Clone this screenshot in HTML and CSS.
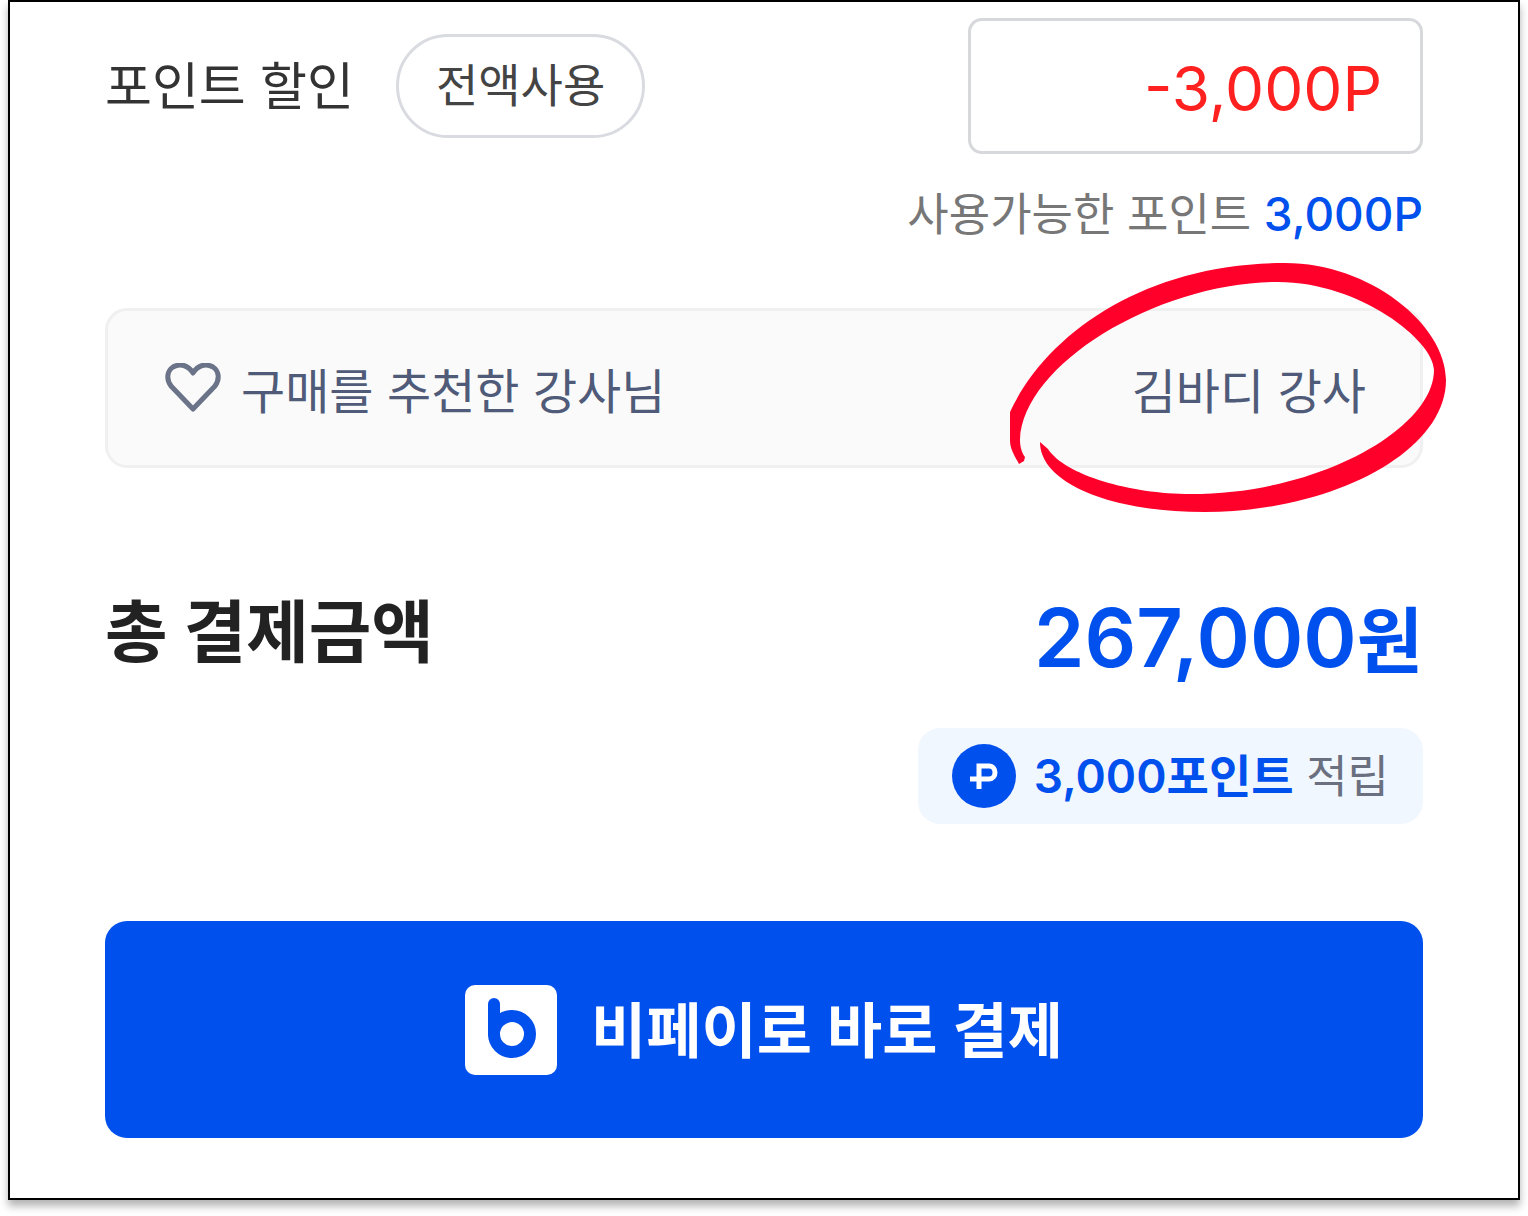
FILE: index.html
```html
<!DOCTYPE html>
<html lang="ko">
<head>
    <meta charset="UTF-8">
    <meta name="viewport" content="width=device-width, initial-scale=1.0">
    <title>결제</title>
    <link rel="stylesheet" href="styles.css">
</head>
<body>

    <form class="card">
        <!-- Point discount -->
        <div class="row">
            <div class="point-label">
                <label for="point">포인트 할인</label>
                <button type="button" class="btn-all">전액사용</button>
            </div>
            <input type="text" id="point" class="point-input" value="-3,000P">
        </div>
        <p class="available">사용가능한 포인트 <strong>3,000P</strong></p>

        <!-- Recommended instructor -->
        <div class="instructor">
            <svg class="icon-heart" viewBox="0 0 56 50" aria-hidden="true">
                <path d="M28 46 L6 23 C1 16 2 8 8 4 C15 0 23 2 28 10 C33 2 41 0 48 4 C54 8 55 16 50 23 Z"/>
            </svg>
            <span>구매를 추천한 강사님</span>
            <span class="instructor-name">김바디 강사</span>
            <svg class="marker" viewBox="0 0 437 249" aria-hidden="true">
                <path d="M0 149 C38 68 138 0 275 0 C360 0 436 62 436 117 C436 190 320 249 195 249 C100 249 30 220 30 179 L38 186 C55 212 120 231 181 231 C310 231 424 165 424 107 C424 78 350 19 268 19 C150 19 13 100 10 177 C10 184 12 190 15 194 L14 198 L9 201 C3 190 0 185 0 177 Z"/>
            </svg>
        </div>

        <!-- Total -->
        <div class="row total">
            <h2>총 결제금액</h2>
            <strong class="price">267,000<span>원</span></strong>
        </div>
        <div class="earn">
            <svg class="icon-point" viewBox="0 0 64 64" aria-hidden="true">
                <circle cx="32" cy="32" r="32"/>
                <path d="M27 45 V22 H37 C45 22 45 35 37 35 H18"/>
            </svg>
            <span><strong>3,000포인트</strong> 적립</span>
        </div>

        <button type="button" class="btn-pay">
            <svg class="logo" viewBox="0 0 92 90" aria-hidden="true">
                <rect width="92" height="90" rx="10"/>
                <path d="M29 19 V49"/>
                <circle cx="47" cy="49" r="18"/>
            </svg>
            <span>비페이로 바로 결제</span>
        </button>
    </form>

</body>
</html>
```

FILE: styles.css
```css
* {
    box-sizing: border-box;
}

body {
    min-height: 100vh;
    margin: 0;
    padding: 0 8px 16px;
    font-family: Inter, "Noto Sans CJK KR", sans-serif;
    background-color: #fff;
    color: #333;
}

button, input {
    font-family: inherit;
}

.card {
    padding: 16px 95px 60px;
    border: 2px solid #000;
    background-color: #fff;
    box-shadow: 0 6px 8px rgba(0, 0, 0, 0.3);
}

.row {
    display: flex;
    justify-content: space-between;
    align-items: center;
}

/* Point discount */
.point-label {
    display: flex;
    align-items: center;
    gap: 42px;
    font-size: 51px;
}

/* Hangul sits low in its line, lift it to the optical middle */
.point-label label, .earn span, .btn-pay span {
    padding-bottom: 6px;
}

.btn-all {
    height: 104px;
    padding: 0 37px 8px;
    border: 3px solid #d9dbe0;
    border-radius: 52px;
    background-color: #fff;
    color: #444;
    font-size: 46px;
}

.point-input {
    width: 455px;
    height: 136px;
    padding: 4px 38px 0;
    border: 3px solid #d6d8dc;
    border-radius: 14px;
    background-color: #fff;
    color: #ff2020;
    font-size: 62px;
    text-align: right;
}

.available {
    margin: 28px 0 61px;
    color: #777;
    font-size: 45px;
    line-height: 64px;
    text-align: right;
}

.available strong {
    color: #0050ee;
    font-size: 46px;
    font-weight: 500;
}

/* Recommended instructor */
.instructor {
    position: relative;
    display: flex;
    align-items: center;
    height: 160px;
    padding: 0 54px 0 57px;
    border: 3px solid #f0f0f1;
    border-radius: 22px;
    background-color: #fafafa;
    color: #4f5b78;
    font-size: 48px;
}

.instructor-name {
    margin-left: auto;
}

.icon-heart {
    width: 56px;
    height: 50px;
    margin-right: 20px;
    fill: none;
    stroke: #6b7388;
    stroke-width: 5;
    stroke-linejoin: round;
}

/* Hand drawn circle over the name */
.marker {
    position: absolute;
    top: -48px;
    right: -27px;
    width: 437px;
    height: 249px;
    fill: #ff002b;
}

/* Total */
.total {
    align-items: flex-start;
    height: 104px;
    margin: 120px 0 36px;
}

.total h2 {
    margin: 0;
    color: #222;
    font-size: 68px;
    line-height: 88px;
}

.price {
    color: #0050ee;
    font-size: 81px;
    font-weight: 600;
    line-height: 100px;
}

.price span {
    font-size: 72px;
    line-height: 72px;
}

.earn {
    display: flex;
    align-items: center;
    gap: 18px;
    width: fit-content;
    height: 96px;
    margin-left: auto;
    padding: 0 34px;
    border-radius: 22px;
    background-color: #f1f7ff;
    color: #6b7080;
    font-size: 45px;
}

.earn strong {
    color: #0050ee;
    font-size: 46px;
    font-weight: 600;
}

.icon-point {
    width: 64px;
    height: 64px;
    fill: #0050ee;
}

.icon-point path {
    fill: none;
    stroke: #fff;
    stroke-width: 5;
}

/* Pay button */
.btn-pay {
    display: flex;
    justify-content: center;
    align-items: center;
    gap: 34px;
    width: 100%;
    height: 217px;
    margin-top: 97px;
    border: none;
    border-radius: 22px;
    background-color: #0050ee;
    color: #fff;
    font-size: 60px;
    font-weight: 600;
    cursor: pointer;
}

.logo {
    width: 92px;
    height: 90px;
    fill: #fff;
}

.logo path, .logo circle {
    stroke: #0050ee;
    stroke-width: 12;
    stroke-linecap: round;
}
```
